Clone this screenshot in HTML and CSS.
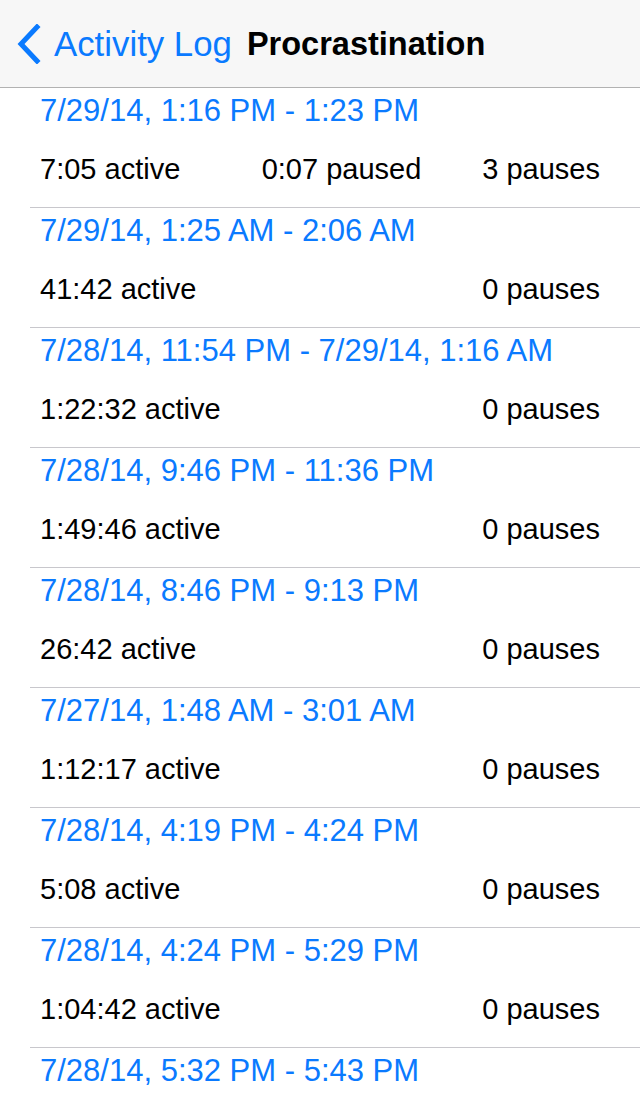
FILE: index.html
```html
<!DOCTYPE html>
<html lang="en">
<head>
<meta charset="utf-8">
<title>Procrastination</title>
<link rel="stylesheet" href="styles.css">
</head>
<body>
<header class="nav">
  <a class="back" href="#">
    <svg class="chevron" width="26" height="40" viewBox="0 0 26 40" aria-hidden="true">
      <path d="M21 3 L5 20 L21 37" fill="none" stroke="#0a7aff" stroke-width="5" stroke-linecap="square" stroke-linejoin="miter"/>
    </svg>
    <span class="back-label">Activity Log</span>
  </a>
  <h1 class="title">Procrastination</h1>
</header>
<main class="list">
  <div class="row">
    <div class="date">7/29/14, 1:16 PM - 1:23 PM</div>
    <div class="stats"><span class="active">7:05 active</span><span class="paused">0:07 paused</span><span class="pauses">3 pauses</span></div>
  </div>
  <div class="row">
    <div class="date">7/29/14, 1:25 AM - 2:06 AM</div>
    <div class="stats"><span class="active">41:42 active</span><span class="pauses">0 pauses</span></div>
  </div>
  <div class="row">
    <div class="date">7/28/14, 11:54 PM - 7/29/14, 1:16 AM</div>
    <div class="stats"><span class="active">1:22:32 active</span><span class="pauses">0 pauses</span></div>
  </div>
  <div class="row">
    <div class="date">7/28/14, 9:46 PM - 11:36 PM</div>
    <div class="stats"><span class="active">1:49:46 active</span><span class="pauses">0 pauses</span></div>
  </div>
  <div class="row">
    <div class="date">7/28/14, 8:46 PM - 9:13 PM</div>
    <div class="stats"><span class="active">26:42 active</span><span class="pauses">0 pauses</span></div>
  </div>
  <div class="row">
    <div class="date">7/27/14, 1:48 AM - 3:01 AM</div>
    <div class="stats"><span class="active">1:12:17 active</span><span class="pauses">0 pauses</span></div>
  </div>
  <div class="row">
    <div class="date">7/28/14, 4:19 PM - 4:24 PM</div>
    <div class="stats"><span class="active">5:08 active</span><span class="pauses">0 pauses</span></div>
  </div>
  <div class="row">
    <div class="date">7/28/14, 4:24 PM - 5:29 PM</div>
    <div class="stats"><span class="active">1:04:42 active</span><span class="pauses">0 pauses</span></div>
  </div>
  <div class="row row-last">
    <div class="date">7/28/14, 5:32 PM - 5:43 PM</div>
  </div>
</main>
</body>
</html>
```
FILE: styles.css
```css
html, body {
  margin: 0;
  padding: 0;
  background: #ffffff;
  font-family: "Liberation Sans", Arial, sans-serif;
  color: #000;
  overflow: hidden;
}

.nav {
  height: 87px;
  border-bottom: 1px solid #b2b2b2;
  background: #f7f7f7;
  display: flex;
  align-items: center;
  padding-left: 16px;
}

.back {
  display: flex;
  align-items: center;
  text-decoration: none;
  color: #0a7aff;
}

.chevron {
  display: block;
  margin-right: 12px;
}

.back-label {
  font-size: 34.8px;
  line-height: 40px;
}

.title {
  margin: 0 0 0 15px;
  font-size: 32.5px;
  line-height: 40px;
  font-weight: bold;
  color: #000;
}

.list {
  display: flex;
  flex-direction: column;
}

.row {
  margin-left: 30px;
  padding: 0 40px 2px 10px;
  height: 117px;
  border-bottom: 1px solid #c8c7cc;
  display: flex;
  flex-direction: column;
}

.row-last {
  border-bottom: none;
}

.date {
  font-size: 31px;
  line-height: 45px;
  color: #0a7aff;
  white-space: nowrap;
}

.stats {
  display: flex;
  font-size: 29px;
  line-height: 72px;
  white-space: nowrap;
}

.active {
  flex: 1;
}

.paused {
  margin-right: 61px;
}
```
